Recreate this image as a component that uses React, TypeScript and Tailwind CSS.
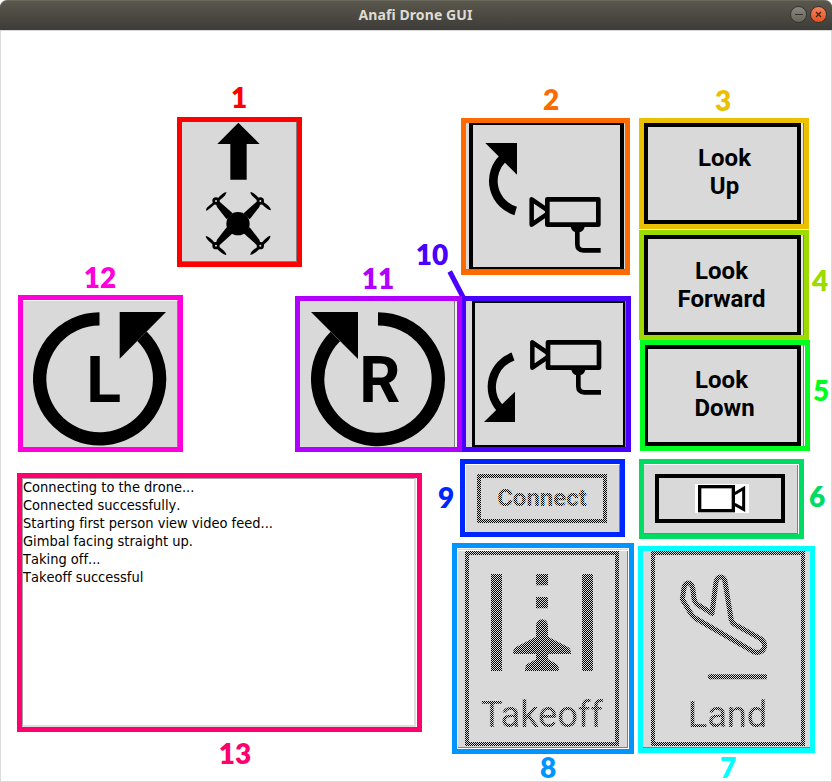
import type { ReactNode } from "react";

const lines = [
  "Connecting to the drone...",
  "Connected successfully.",
  "Starting first person view video feed...",
  "Gimbal facing straight up.",
  "Taking off...",
  "Takeoff successful",
];

function Tag({ className, children }: { className: string; children: ReactNode }) {
  return (
    <span
      className={`pointer-events-none absolute w-10 text-center font-[Lato,sans-serif] text-[28px] leading-[30px] font-extrabold ${className}`}
    >
      {children}
    </span>
  );
}

/* Outlined region with its numbered tag. */
function Region({ className, tag, tagClass, children }: { className: string; tag: string; tagClass: string; children: ReactNode }) {
  return (
    <div className={`relative shrink-0 ${className}`}>
      {children}
      <Tag className={tagClass}>{tag}</Tag>
    </div>
  );
}

/* 50% checkerboard drawn over disabled buttons. */
function Stipple({ id }: { id: string }) {
  return (
    <svg className="absolute inset-0 h-full w-full" shapeRendering="crispEdges">
      <defs>
        <pattern id={id} width="2" height="2" patternUnits="userSpaceOnUse">
          <rect width="1" height="1" fill="#d9d9d9" />
          <rect x="1" y="1" width="1" height="1" fill="#d9d9d9" />
        </pattern>
      </defs>
      <rect width="100%" height="100%" fill={`url(#${id})`} />
    </svg>
  );
}

function DroneUpIcon() {
  return (
    <svg className="block h-[139px] w-[114px]" viewBox="36 126 342 417">
      <path d="M205 128L269 192H230V299H181V192H142Z" />
      <circle cx="204" cy="431" r="35" />
      <path d="M134 359L150 366L188 400L170 418L141 381ZM275 359L259 366L221 400L239 418L268 381ZM134 501L150 494L188 460L170 442L141 479ZM275 501L259 494L221 460L239 442L268 479Z" />
      <g fill="#d9d9d9" stroke="#000" strokeWidth="8">
        <circle cx="138" cy="363" r="7" />
        <circle cx="271" cy="363" r="7" />
        <circle cx="138" cy="497" r="7" />
        <circle cx="271" cy="497" r="7" />
      </g>
      <path d="M108 392Q106 383 132 366L136 371Q114 391 108 392ZM169 336Q171 344 147 362L142 356Q160 337 169 336ZM241 336Q250 336 268 356L263 362Q241 345 241 336ZM303 391Q294 391 275 372L280 366Q303 380 303 391ZM107 468Q117 468 134 488L130 495Q107 477 107 468ZM169 525Q158 524 141 506L147 500Q170 516 169 525ZM301 467Q292 468 275 488L280 495Q303 477 301 467ZM241 525Q252 523 269 506L263 500Q240 516 241 525Z" />
    </svg>
  );
}

function GimbalCamera({ bracket }: { bracket: string }) {
  return (
    <g fill="none" stroke="#000" strokeWidth="14" strokeLinejoin="round">
      <rect x="292" y="358" width="153" height="76" />
      <path d="M290 389L245 358V434L290 403" strokeWidth="13.5" />
      <path d={bracket} />
      <path d="M362 440H404Q402 451 391 456H375Q364 451 362 440Z" fill="#000" stroke="none" />
    </g>
  );
}

function GimbalUpIcon() {
  return (
    <svg className="block h-[142px] w-[147px]" viewBox="69 135 441 426">
      <path d="M106 189H201V284Z" />
      <path d="M158 236A94 94 0 0 0 197 393" fill="none" stroke="#000" strokeWidth="26" />
      <GimbalCamera bracket="M382 445V493Q382 511 400 511H452" />
    </svg>
  );
}

function GimbalDownIcon() {
  return (
    <svg className="block h-[142px] w-[148px]" viewBox="195 189 444 426">
      <path d="M222 546H315V455Z" />
      <path d="M309 349.500A97 97 0 0 0 270 505" fill="none" stroke="#000" strokeWidth="25" />
      <g transform="translate(122 -51)">
        <GimbalCamera bracket="M383 445V490Q383 508 401 508H451" />
      </g>
    </svg>
  );
}

function RotateLeftIcon() {
  return (
    <svg className="block h-[146px] w-[154px]" viewBox="39 123 462 438">
      <path d="M329 156H468L329 296Z" />
      <path d="M268.500 176.500A180 180 0 1 0 396 229" fill="none" stroke="#000" strokeWidth="40" />
      <text x="229" y="426" fontSize="193" fontWeight="700" fontFamily="Roboto, sans-serif">L</text>
    </svg>
  );
}

function RotateRightIcon() {
  return (
    <svg className="block h-[146px] w-[154px]" viewBox="45 183 462 438">
      <path d="M78 216H219V357Z" />
      <path d="M279 236.500A181 181 0 1 1 151 289.500" fill="none" stroke="#000" strokeWidth="40" />
      <text x="223" y="487" fontSize="193" fontWeight="700" fontFamily="Roboto, sans-serif">R</text>
    </svg>
  );
}

function VideoIcon() {
  return (
    <svg className="block h-[29px] w-[54px] bg-white" viewBox="795 102 162 87">
      <g fill="none" stroke="#000">
        <rect x="809" y="110" width="101" height="72" strokeWidth="10" />
        <path d="M914 131L941 115V178L914 163" strokeWidth="9" />
      </g>
    </svg>
  );
}

function TakeoffIcon() {
  return (
    <svg className="block h-[187px] w-[146px]" viewBox="87 45 438 561">
      <path d="M153 102H186V393H153ZM426 102H459V393H426ZM288 102H324V136H288ZM288 171H324V205H288Z" />
      <path d="M288 256Q290 238 306 238Q322 238 324 256V290L384 321Q393 326 393 342H324V358L350 372Q357 377 357 393H255Q255 377 262 372L288 358V342H219Q219 326 228 321L288 290Z" />
      <text x="123" y="561" fontSize="109" fontWeight="400" fontFamily="Roboto, sans-serif" textLength="366">Takeoff</text>
    </svg>
  );
}

function LandIcon() {
  return (
    <svg className="block h-[187px] w-[146px]" viewBox="75 45 438 561">
      <g fill="none" stroke="#000" strokeWidth="15" strokeLinejoin="round">
        <path d="M157 178L162 143Q165 129 175 129Q185 129 188 143L192 176Q194 188 203 194L246 220L258 126Q261 111 271 111Q282 111 285 124L303 236Q305 248 315 254L390 295Q407 306 403 323Q394 343 370 335L195 234Q187 228 181 218Z" />
        <path d="M240 410H411" strokeWidth="15" />
        <path d="M241 410H243" strokeWidth="15" strokeLinecap="round" />
      </g>
      <text x="173" y="561" fontSize="109" fontWeight="400" fontFamily="Roboto, sans-serif" textLength="239">Land</text>
    </svg>
  );
}

export default function App() {
  return (
    <div className="flex h-[782px] w-[832px] flex-col overflow-hidden bg-white text-black">
      <header className="relative flex h-[30px] shrink-0 items-center justify-center rounded-t-[7px] border-t border-[#6b695e] bg-linear-to-b from-[#5a574c] to-[#3d3c38]">
        <h1 className="pr-px pb-0.5 font-['Noto_Sans',sans-serif] text-[14px] leading-none font-bold tracking-[0.1px] text-[#dfdbd2]">
          Anafi Drone GUI
        </h1>
        <div className="absolute top-[5px] right-[5px] flex gap-[3px]">
          <button className="flex size-[17px] items-center justify-center rounded-full border border-[#33322e] bg-linear-to-b from-[#8a887e] to-[#67655c]">
            <span className="h-px w-2 bg-[#33322e]" />
          </button>
          <button className="flex size-[17px] items-center justify-center rounded-full border border-[#33322e] bg-linear-to-b from-[#f58259] to-[#e5521d]">
            <svg className="size-[7px]" viewBox="0 0 7 7" stroke="#45210f" strokeWidth="1.300">
              <path d="M1 1L6 6M6 1L1 6" />
            </svg>
          </button>
        </div>
      </header>

      <main className="flex flex-1 flex-col border border-[#dadada]">
        <section className="flex h-[421px] shrink-0">
          <div className="flex w-[461px] shrink-0 flex-col pt-[86px]">
            <Region className="ml-[176px] h-[150px] w-[125px] border-[5px] border-[#ff0000]" tag="1" tagClass="left-[37px] top-[-40px] text-[#ff0000]">
              <button className="block h-full w-full border-r border-b border-[#808080] bg-[#d9d9d9]">
                <DroneUpIcon />
              </button>
            </Region>
            <div className="mt-7 flex pl-[17px]">
              <Region className="h-[157px] w-[165px] border-[5px] border-[#ff00dc]" tag="12" tagClass="left-[57px] top-[-38px] text-[#ff00dc]">
                <button className="block h-full w-full border-t border-r border-t-white border-r-[#808080] bg-[#d9d9d9]">
                  <RotateLeftIcon />
                </button>
              </Region>
              <Region className="z-10 mt-px ml-28 h-[156px] w-[167px] border-[5px] border-[#b200ff]" tag="11" tagClass="left-[58px] top-[-38px] text-[#b200ff]">
                <div className="flex h-full bg-[#f0f0f0]">
                  <button className="block h-full w-[155px] border-r border-[#808080] bg-[#d9d9d9]">
                    <RotateRightIcon />
                  </button>
                </div>
              </Region>
            </div>
          </div>

          <div className="-ml-px flex w-[170px] shrink-0 flex-col gap-[21px] pt-[87px]">
            <Region className="h-[157px] w-[169px] border-[5px] border-[#ff6a00]" tag="2" tagClass="left-[65px] top-[-39px] text-[#ff6a00]">
              <button className="flex h-full w-full border-b border-[#808080] bg-[#d9d9d9] pl-[3px]">
                <div className="border-x-4 border-y-2 border-black">
                  <GimbalUpIcon />
                </div>
              </button>
            </Region>
            <Region className="h-[156px] w-[170px] border-[5px] border-[#4800ff]" tag="10" tagClass="left-[-54px] top-[-62px] text-[#4800ff]">
              <button className="flex h-full w-full border-r border-[#808080] bg-[#d9d9d9] pl-1.5">
                <div className="border-y-2 border-r-2 border-l-[3px] border-black">
                  <GimbalDownIcon />
                </div>
              </button>
              <svg className="absolute top-[-31px] left-[-19px] h-[30px] w-5" viewBox="0 0 20 30">
                <path d="M2.700 1.500L16.500 28" stroke="#4800ff" strokeWidth="5" />
              </svg>
            </Region>
          </div>

          <div className="ml-2 flex shrink-0 flex-col pt-[87px] font-[Roboto,sans-serif] text-2xl leading-7 font-bold">
            <Region className="h-[111px] w-[170px] border-[5px] border-[#ebc000]" tag="3" tagClass="left-[59px] top-[-38px] text-[#ebc000]">
              <button className="flex h-full w-full border-r border-[#808080] bg-[#e6e6e6]">
                <div className="flex h-full w-[157px] flex-col items-center border-4 border-black bg-[#d9d9d9] pt-[17px] pl-[4px]">
                  <span>Look</span>
                  <span>Up</span>
                </div>
              </button>
            </Region>
            <Region className="mt-px h-[110px] w-[170px] border-[5px] border-[#9ddb00]" tag="4" tagClass="left-[156px] top-[30px] text-[#9ddb00]">
              <button className="flex h-full w-full border-r border-[#808080] bg-[#e6e6e6]">
                <div className="flex h-full w-[157px] flex-col items-center border-4 border-b-[3px] border-black bg-[#d9d9d9] pt-[18px] pr-[2px]">
                  <span>Look</span>
                  <span>Forward</span>
                </div>
              </button>
            </Region>
            <Region className="ml-px h-[111px] w-[170px] border-[5px] border-[#00ff21]" tag="5" tagClass="left-[156px] top-[30px] text-[#00ff21]">
              <div className="h-full bg-white pr-px">
                <button className="flex h-full w-full border-r border-[#808080] bg-[#e6e6e6]">
                  <div className="flex h-full w-[156px] flex-col items-center border-4 border-l-[3px] border-black bg-[#d9d9d9] pt-[17px]">
                    <span className="pr-[2px]">Look</span>
                    <span className="pl-[4px]">Down</span>
                  </div>
                </button>
              </div>
            </Region>
          </div>
        </section>

        <section className="flex flex-1">
          <Region className="mt-[21px] ml-4 h-[259px] w-[405px] border-[5px] border-[#ff006e]" tag="13" tagClass="left-[193px] top-[260px] text-[#ff006e]">
            <div className="h-full bg-white pr-px">
              <div className="h-full border border-r-2 border-b-2 border-t-[#a3a3a3] border-r-[#dedede] border-b-[#dedede] border-l-[#a3a3a3] font-['DejaVu_Sans_Condensed','DejaVu_Sans',sans-serif] text-[14.500px] leading-[18px] [font-kerning:none] [font-variant-ligatures:none]">
                {lines.map((line, i) => (
                  <p key={line} className={i === 0 ? "-mt-px whitespace-nowrap" : "whitespace-nowrap"}>{line}</p>
                ))}
              </div>
            </div>
          </Region>

          <div className="ml-[30px] flex shrink-0 flex-col pt-[7px]">
            <Region className="ml-2 h-[78px] w-[165px] border-[5px] border-[#0026ff]" tag="9" tagClass="left-[-39px] top-[18px] text-[#0026ff]">
              <button className="flex h-full w-full items-start border-t border-r border-l border-t-white border-r-[#808080] border-l-white bg-[#d9d9d9] pt-[9px] pl-[11px]">
                <div className="relative flex h-[49px] w-[130px] justify-center border-4 border-black pt-[6px] font-[Roboto,sans-serif] text-2xl leading-7 font-bold">
                  Connect
                  <div className="absolute -inset-1">
                    <Stipple id="stipple-connect" />
                  </div>
                </div>
              </button>
            </Region>
            <Region className="mt-1.5 h-[211px] w-[182px] border-[5px] border-[#0094ff]" tag="8" tagClass="left-[71px] top-[204px] text-[#0094ff]">
              <div className="h-full border-t border-r border-b border-l border-white bg-white">
                <div className="h-full border-t border-[#d9d9d9] bg-white pt-px">
                  <button className="flex h-[197px] w-[170px] items-start border-r border-b border-[#808080] bg-[#d9d9d9] pl-[7px]">
                    <div className="relative h-[195px] w-[154px] border-4 border-black">
                      <TakeoffIcon />
                      <div className="absolute -inset-1">
                        <Stipple id="stipple-takeoff" />
                      </div>
                    </div>
                  </button>
                </div>
              </div>
            </Region>
          </div>

          <div className="ml-1 flex shrink-0 flex-col gap-[7px] pt-[7px]">
            <Region className="ml-px h-20 w-[165px] border-[5px] border-[#00db63]" tag="6" tagClass="left-[153px] top-[17px] text-[#00db63]">
              <div className="h-full bg-white pt-px pr-px">
                <button className="flex h-full w-full items-start border-r border-b border-[#808080] bg-[#d9d9d9] pt-[9px] pl-[11px]">
                  <div className="h-[49px] w-[130px] border-4 border-black pt-1.5 pl-9">
                    <VideoIcon />
                  </div>
                </button>
              </div>
            </Region>
            <Region className="h-[207px] w-[177px] border-[5px] border-[#00ffff]" tag="7" tagClass="left-[65px] top-[201px] text-[#00ffff]">
              <button className="flex h-full w-full items-start border-b border-[#808080] bg-[#d9d9d9] pl-2">
                <div className="relative h-[195px] w-[154px] border-4 border-black">
                  <LandIcon />
                  <div className="absolute -inset-1">
                    <Stipple id="stipple-land" />
                  </div>
                </div>
              </button>
            </Region>
          </div>
        </section>
      </main>
    </div>
  );
}
